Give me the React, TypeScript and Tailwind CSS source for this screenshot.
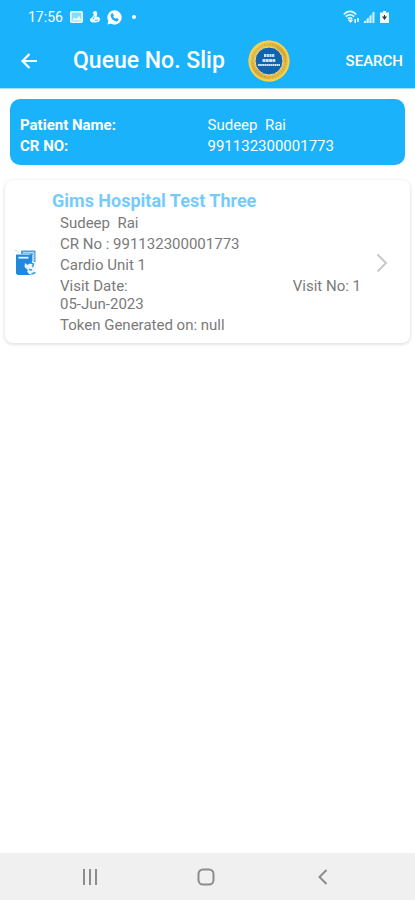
import type { ReactNode } from "react";

type Visit = {
    hospital: string;
    patient: string;
    crNo: string;
    unit: string;
    date: string;
    visitNo: number;
    tokenDate: string | null;
}

const visits: Visit[] = [
    {
        hospital: "Gims Hospital Test Three",
        patient: "Sudeep  Rai",
        crNo: "991132300001773",
        unit: "Cardio Unit 1",
        date: "05-Jun-2023",
        visitNo: 1,
        tokenDate: null,
    },
]

function StatusBar() {
    return (
        <div className="flex h-[34px] items-center justify-between pl-7 pr-[26px]">
            <div className="flex items-center gap-[7px]">
                <span className="text-[14px] leading-5">17:56</span>
                <svg width="13" height="12" viewBox="0 0 13 12">
                    <rect x=".8" y=".8" width="11.400" height="10.400" rx="1" fill="#8fd9fd" stroke="#f2fbff" strokeWidth="1.600" />
                    <path d="M2 9.500l2.500-3L6.500 8 9 5l2.500 4.500z" fill="#f2fbff" />
                </svg>
                <svg width="10" height="12" viewBox="0 0 10 12" fill="#f2fbff">
                    <path d="M4.500 0c2.500 0 3.200 2 2.500 4L6.500 6c2-.5 3.500.5 3.500 2.300C10 10.500 7.500 11.500 5.500 11.500H3c-2 0-3-1-3-2.500 0-1.500 1.500-2 2.500-3L4 3.500 2.500 2z" />
                    <path d="M4.500 5.500L3 8.500M5 9.500l3-.5" stroke="#1ab2fb" strokeWidth=".8" />
                </svg>
                <svg width="15" height="15" viewBox="0 0 15 15">
                    <circle cx="7.5" cy="7.5" r="7.2" fill="#fff" />
                    <path d="M0.500 14.500l1-4 3 3z" fill="#fff" />
                    <path d="M4.500 3.500l1.200-.3 1.300 2.200-.8 1c.5 1 1.300 1.800 2.400 2.300l.9-.9 2 1.200c0 1.600-1.100 2.500-2.400 2.400C6.400 11 4 8.500 3.700 5.800c-.1-.9.200-1.800.8-2.300z" fill="#1ab2fb" />
                </svg>
                <span className="ml-[3px] size-1 rounded-full bg-white" />
            </div>
            <div className="flex items-center gap-[3px]">
                <svg width="17" height="14" viewBox="0 0 17 14" fill="none" stroke="#e4f7ff">
                    <path d="M.8 4.500C4.500.3 9.500.3 13.200 4.500M2.800 6.700c2.500-2.400 6-2.400 8.400 0M4.800 8.900c1.400-1.200 3-1.200 4.400 0" strokeWidth="1.700" />
                    <path d="M5.500 10L7.500 12.500l2-2.500z" fill="#e4f7ff" />
                    <path d="M12.200 13V9M15 8v4" strokeWidth="1.600" />
                </svg>
                <svg width="12" height="12" viewBox="0 0 12 12" stroke="#e4f7ff">
                    <path d="M0 12L11.500 0v12z" fill="#a8e2fd" stroke="none" opacity=".5" />
                    <path d="M2 12v-2M4.700 12V7.500" strokeWidth="1.800" />
                    <path d="M7.500 12V4.500M10.500 12V1" strokeWidth="1.800" opacity=".8" />
                </svg>
                <svg width="9" height="12" viewBox="0 0 9 12" className="ml-0.5">
                    <path d="M3 0h3v1.500H9V12H0V1.500h3z" fill="#effaff" />
                    <path d="M2 5.500h5L4.500 9z" fill="#333" />
                    <path d="M4.500 4v2" stroke="#333" />
                </svg>
            </div>
        </div>
    )
}

function Seal() {
    return (
        <svg width="42" height="42" viewBox="0 0 42 42" role="img" aria-label="Hospital seal">
            <defs>
                <linearGradient id="gold" x1="0" y1="0" x2="1" y2="1">
                    <stop offset="0" stopColor="#f3dc6c" />
                    <stop offset=".5" stopColor="#dcae3c" />
                    <stop offset="1" stopColor="#f0cf52" />
                </linearGradient>
            </defs>
            <circle cx="21" cy="21" r="20.500" fill="url(#gold)" />
            <circle cx="21" cy="21" r="19.500" fill="none" stroke="#f3d24f" strokeWidth="2" />
            <circle cx="21" cy="21" r="16.700" fill="none" stroke="#b3842c" strokeWidth="2" strokeDasharray="1.500 1.200" opacity=".4" />
            <circle cx="21" cy="21" r="14" fill="#0f63b0" stroke="#efe08c" strokeWidth="1" />
            <g stroke="#c8e3f8" fill="none">
                <path d="M16 15.500h10.500" strokeWidth="3" strokeDasharray="2.200 .5" />
                <path d="M14.500 20.500h13" strokeWidth="3" strokeDasharray="2.900 .4" />
                <path d="M10 25h22" strokeWidth="1.800" strokeDasharray="1.800 .3" />
            </g>
        </svg>
    )
}

function SlipIcon() {
    return (
        <svg width="22" height="27" viewBox="0 0 22 27" className="shrink-0">
            {/* back sheet */}
            <path d="M6 1.500h14.500v12l-3-1.500V6H6z" fill="#4a9fe0" />
            <path d="M8 3.800h11" stroke="#c3e2f8" strokeWidth="1.300" />
            <path d="M18.700 4v8" stroke="#b3dcfa" strokeWidth="1.200" />
            {/* folder */}
            <path d="M1 5.500h16V14l-3 1.500v7l3 3.500H2.500L1 24.500z" fill="#2388dc" />
            <path d="M3.500 8.700h10" stroke="#e7f5ff" strokeWidth="1.800" />
            <path d="M1 5.500h14" stroke="#8cc8f3" strokeWidth="1" />
            {/* hand */}
            <path d="M10 14l2.500 2 2-1.500 1.500 1.500 4.500-2v12H17l-3-1-2-2.500 1-1.500-3.500-3z" fill="#e9f5fe" />
            <path d="M15 13.500l3.500 1.500-1 3M14 20.500l3 .5M16.500 25l4-1.500" fill="none" stroke="#3d99de" strokeWidth="1.500" />
            <path d="M0 1.500h2M2 3h2" stroke="#b6dcf8" />
        </svg>
    )
}

function Line({ children }: { children: ReactNode }) {
    return <p className="whitespace-pre leading-[18px]">{children}</p>
}

function VisitCard({ visit }: { visit: Visit }) {
    return (
        <button
            type="button"
            className="mx-[5px] mt-[15px] flex items-center rounded-lg bg-white pb-[9px] pl-2.5 pr-[22px] pt-[11px] text-left shadow-[0_1px_3px_1px_rgba(0,0,0,0.1)]"
        >
            <SlipIcon />
            <div className="ml-[15px] min-w-0 flex-1">
                <h2 className="text-[18px] font-bold leading-5 text-[#76cbfb]">{visit.hospital}</h2>
                <div className="mt-[3px] flex flex-col gap-[3px] pl-2 text-[15px] text-[#7a7a7a]">
                    <Line>{visit.patient}</Line>
                    <Line>CR No : {visit.crNo}</Line>
                    <Line>{visit.unit}</Line>
                    <div className="flex justify-between pr-[15px]">
                        <div>
                            <Line>Visit Date:</Line>
                            <Line>{visit.date}</Line>
                        </div>
                        <Line>Visit No: {visit.visitNo}</Line>
                    </div>
                    <Line>Token Generated on: {String(visit.tokenDate)}</Line>
                </div>
            </div>
            <svg width="12" height="20" viewBox="0 0 12 20" fill="none" stroke="#c8c8c8" strokeWidth="2" className="shrink-0">
                <path d="M1.500 1.500L10 10l-8.500 8.500" />
            </svg>
        </button>
    )
}

export default function App() {
    return (
        <div className="flex min-h-screen flex-col bg-white font-[Roboto,sans-serif]">
            <header className="border-b border-[#a9e0fc] bg-[#1ab2fb] text-white">
                <StatusBar />
                <div className="flex h-[54px] items-center pl-5 pr-3">
                    <button type="button" aria-label="Back">
                        <svg width="18" height="18" viewBox="0 0 18 18" fill="none" stroke="currentColor" strokeWidth="2.2">
                            <path d="M17 9H2.500M9.500 2L2.500 9l7 7" />
                        </svg>
                    </button>
                    <h1 className="ml-[35px] mr-[23px] text-[23px] font-medium leading-7">Queue No. Slip</h1>
                    <Seal />
                    <button type="button" className="ml-auto text-[15px] font-medium leading-5">SEARCH</button>
                </div>
            </header>

            <main className="flex flex-1 flex-col">
                <dl className="mx-2.5 mt-2.5 grid grid-cols-2 gap-y-[3px] rounded-[10px] bg-[#1ab2fb] px-2.5 pb-2.5 pt-[17px] text-[15px] leading-[18px] text-white">
                    <dt className="font-bold">Patient Name:</dt>
                    <dd className="whitespace-pre">{"Sudeep  Rai"}</dd>
                    <dt className="font-bold">CR NO:</dt>
                    <dd>991132300001773</dd>
                </dl>
                {visits.map((visit) => (
                    <VisitCard key={visit.visitNo} visit={visit} />
                ))}
            </main>

            <nav className="grid h-[47px] grid-cols-3 place-items-center bg-[#f0f0f0] pl-8 pr-[34px] text-[#8c8c8c]">
                <button type="button" aria-label="Recent apps">
                    <svg width="16" height="16" viewBox="0 0 16 16" stroke="currentColor" strokeWidth="2">
                        <path d="M2 0v16M8 0v16M14 0v16" />
                    </svg>
                </button>
                <button type="button" aria-label="Home">
                    <svg width="18" height="18" viewBox="0 0 18 18" fill="none" stroke="currentColor" strokeWidth="2">
                        <rect x="1.500" y="1.500" width="15" height="15" rx="4.500" />
                    </svg>
                </button>
                <button type="button" aria-label="Go back">
                    <svg width="10" height="16" viewBox="0 0 10 16" fill="none" stroke="currentColor" strokeWidth="2">
                        <path d="M8.500 1L1.500 8l7 7" />
                    </svg>
                </button>
            </nav>
        </div>
    )
}
